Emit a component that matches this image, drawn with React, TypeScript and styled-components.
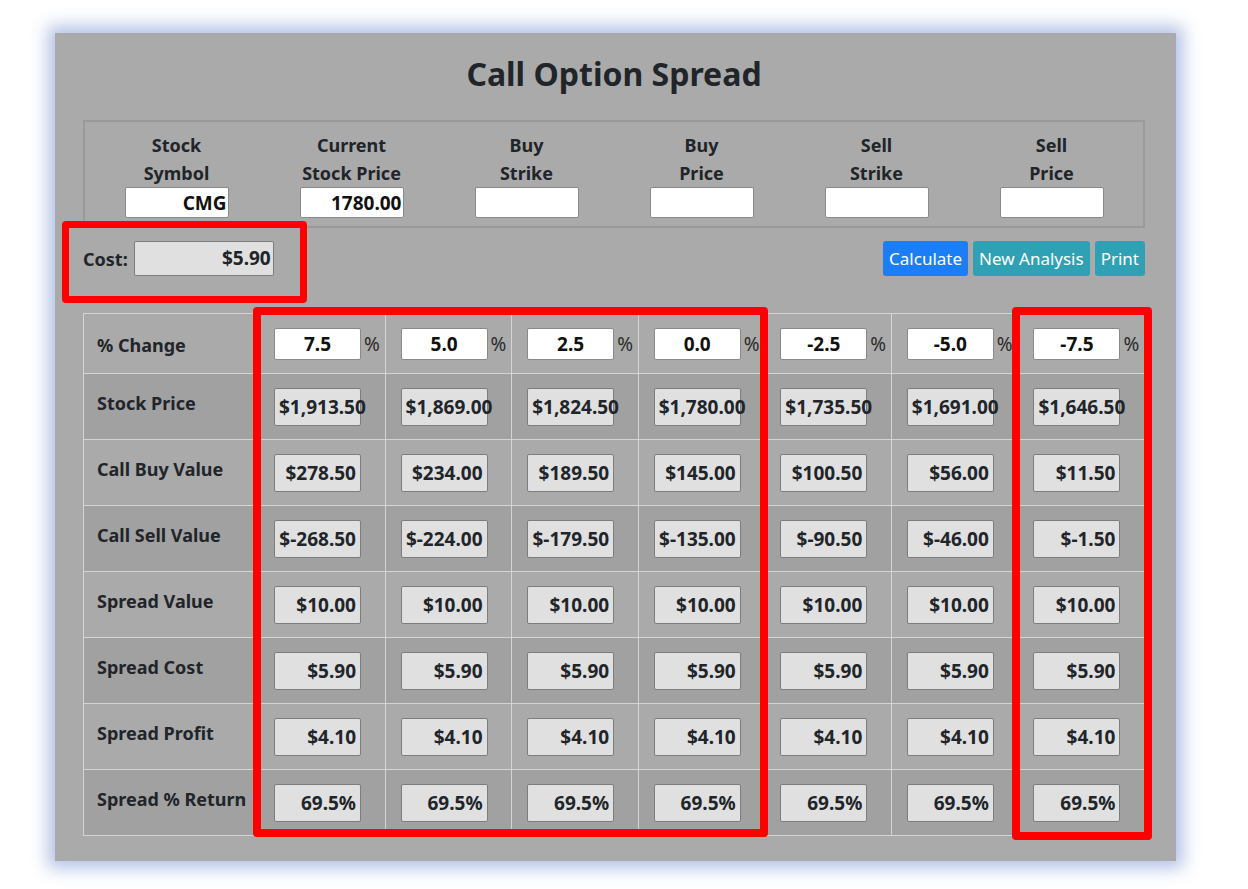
import React from "react";
import styled, { createGlobalStyle } from "styled-components";

const Global = createGlobalStyle`
  html, body { margin: 0; padding: 0; background: #ffffff; }
  body { font-family: "Noto Sans", "Open Sans", sans-serif; color: #212529; }
  * { box-sizing: border-box; }
`;

const Page = styled.div`
  position: relative;
  width: 1248px;
  min-height: 889px;
  padding: 33px 0 28px 55px;
`;

const Panel = styled.div`
  width: 1121px;
  background: #aaaaaa;
  padding: 22px 31px 25px 28px;
  box-shadow: 0 0 16px 7px rgba(168, 186, 226, 0.9);
`;

const Title = styled.h2`
  margin: 0;
  text-align: center;
  font-size: 32px;
  line-height: 38px;
  font-weight: 700;
  color: #212529;
`;

const Fieldset = styled.div`
  margin-top: 27px;
  border: 2px solid #9a9a9a;
  padding: 9px 5px 8px 4px;
  display: grid;
  grid-template-columns: repeat(6, 175px);
`;

const Field = styled.div`
  display: flex;
  flex-direction: column;
  align-items: center;
`;

const FieldLabel = styled.div`
  font-size: 18px;
  line-height: 28px;
  font-weight: 700;
  text-align: center;
  color: #212529;
`;

const TextInput = styled.input`
  width: 104px;
  height: 31px;
  border: 1px solid #8a8a8a;
  border-radius: 2px;
  background: #ffffff;
  font-family: "Noto Sans", sans-serif;
  font-size: 19px;
  font-weight: 700;
  color: #111;
  text-align: right;
  padding: 0 1px;
  outline: none;
`;

const ActionBar = styled.div`
  margin-top: 13px;
  display: flex;
  align-items: center;
  justify-content: space-between;
  height: 35px;
`;

const CostGroup = styled.div`
  display: flex;
  align-items: center;
  gap: 6px;
`;

const CostLabel = styled.span`
  font-size: 18px;
  font-weight: 700;
  color: #212529;
`;

const CostBox = styled.div`
  width: 140px;
  height: 35px;
  border: 1px solid #7d7d7d;
  border-radius: 2px;
  background: #e0e0e0;
  font-size: 19px;
  font-weight: 700;
  line-height: 33px;
  text-align: right;
  padding: 0 2px;
  color: #212529;
`;

const Buttons = styled.div`
  display: flex;
  gap: 5px;
`;

const Btn = styled.button<{ $variant: "primary" | "info" }>`
  height: 35px;
  padding: 0 6px;
  border: none;
  border-radius: 3px;
  font-family: "Noto Sans", sans-serif;
  font-size: 17px;
  color: #ffffff;
  background: ${(p) => (p.$variant === "primary" ? "#1c7ef6" : "#30a1b5")};
  cursor: pointer;
`;

const Table = styled.div`
  margin-top: 37px;
  width: 1062px;
  border-top: 1px solid #d4d4d4;
  border-left: 1px solid #d4d4d4;
`;

const Row = styled.div<{ $dark: boolean; $h: number }>`
  display: grid;
  grid-template-columns: 175px repeat(7, 1fr);
  height: ${(p) => p.$h}px;
  background: ${(p) => (p.$dark ? "#a1a1a1" : "#aaaaaa")};
`;

const LabelCell = styled.div<{ $top: number }>`
  border-right: 1px solid #d4d4d4;
  border-bottom: 1px solid #d4d4d4;
  padding: ${(p) => p.$top}px 0 0 13px;
  font-size: 18px;
  line-height: 27px;
  font-weight: 700;
  color: #212529;
  white-space: nowrap;
`;

const Cell = styled.div`
  border-right: 1px solid #d4d4d4;
  border-bottom: 1px solid #d4d4d4;
  display: flex;
  align-items: center;
  padding-left: 15px;
`;

const PctInput = styled.input`
  width: 87px;
  height: 32px;
  border: 1px solid #8a8a8a;
  border-radius: 2px;
  background: #ffffff;
  font-family: "Noto Sans", sans-serif;
  font-size: 19px;
  font-weight: 700;
  color: #111;
  text-align: center;
  padding: 0;
  outline: none;
`;

const Pct = styled.span`
  margin-left: 3px;
  font-size: 19px;
  color: #2a2a2a;
`;

const ValueBox = styled.div`
  width: 87px;
  height: 38px;
  border: 1px solid #7d7d7d;
  border-radius: 2px;
  background: #e0e0e0;
  font-size: 19px;
  font-weight: 700;
  line-height: 36px;
  text-align: right;
  padding: 0 4px;
  white-space: nowrap;
  color: #212529;
`;

const Highlight = styled.div<{ $x: number; $y: number; $w: number; $h: number; $b: number }>`
  position: absolute;
  left: ${(p) => p.$x}px;
  top: ${(p) => p.$y}px;
  width: ${(p) => p.$w}px;
  height: ${(p) => p.$h}px;
  border: ${(p) => p.$b}px solid #ff0000;
  border-radius: 4px;
  pointer-events: none;
`;

const fields = [
  { l1: "Stock", l2: "Symbol", v: "CMG" },
  { l1: "Current", l2: "Stock Price", v: "1780.00" },
  { l1: "Buy", l2: "Strike", v: "" },
  { l1: "Buy", l2: "Price", v: "" },
  { l1: "Sell", l2: "Strike", v: "" },
  { l1: "Sell", l2: "Price", v: "" },
];

const pcts = ["7.5", "5.0", "2.5", "0.0", "-2.5", "-5.0", "-7.5"];

const rows: { label: string; values: string[] }[] = [
  { label: "Stock Price", values: ["$1,913.50", "$1,869.00", "$1,824.50", "$1,780.00", "$1,735.50", "$1,691.00", "$1,646.50"] },
  { label: "Call Buy Value", values: ["$278.50", "$234.00", "$189.50", "$145.00", "$100.50", "$56.00", "$11.50"] },
  { label: "Call Sell Value", values: ["$-268.50", "$-224.00", "$-179.50", "$-135.00", "$-90.50", "$-46.00", "$-1.50"] },
  { label: "Spread Value", values: Array(7).fill("$10.00") },
  { label: "Spread Cost", values: Array(7).fill("$5.90") },
  { label: "Spread Profit", values: Array(7).fill("$4.10") },
  { label: "Spread % Return", values: Array(7).fill("69.5%") },
];

export default function App() {
  return (
    <>
      <Global />
      <Page>
        <Panel>
          <Title>Call Option Spread</Title>
          <Fieldset>
            {fields.map((f, i) => (
              <Field key={i}>
                <FieldLabel>
                  {f.l1}
                  <br />
                  {f.l2}
                </FieldLabel>
                <TextInput defaultValue={f.v} />
              </Field>
            ))}
          </Fieldset>
          <ActionBar>
            <CostGroup>
              <CostLabel>Cost:</CostLabel>
              <CostBox>$5.90</CostBox>
            </CostGroup>
            <Buttons>
              <Btn $variant="primary">Calculate</Btn>
              <Btn $variant="info">New Analysis</Btn>
              <Btn $variant="info">Print</Btn>
            </Buttons>
          </ActionBar>
          <Table>
            <Row $dark={false} $h={60}>
              <LabelCell $top={18}>% Change</LabelCell>
              {pcts.map((p, i) => (
                <Cell key={i}>
                  <PctInput defaultValue={p} />
                  <Pct>%</Pct>
                </Cell>
              ))}
            </Row>
            {rows.map((r, ri) => (
              <Row key={r.label} $dark={ri % 2 === 0} $h={66}>
                <LabelCell $top={16}>{r.label}</LabelCell>
                {r.values.map((v, i) => (
                  <Cell key={i}>
                    <ValueBox>{v}</ValueBox>
                  </Cell>
                ))}
              </Row>
            ))}
          </Table>
        </Panel>
        <Highlight $x={62} $y={221} $w={245} $h={82} $b={7} />
        <Highlight $x={253} $y={307} $w={515} $h={530} $b={8} />
        <Highlight $x={1012} $y={307} $w={140} $h={533} $b={8} />
      </Page>
    </>
  );
}
